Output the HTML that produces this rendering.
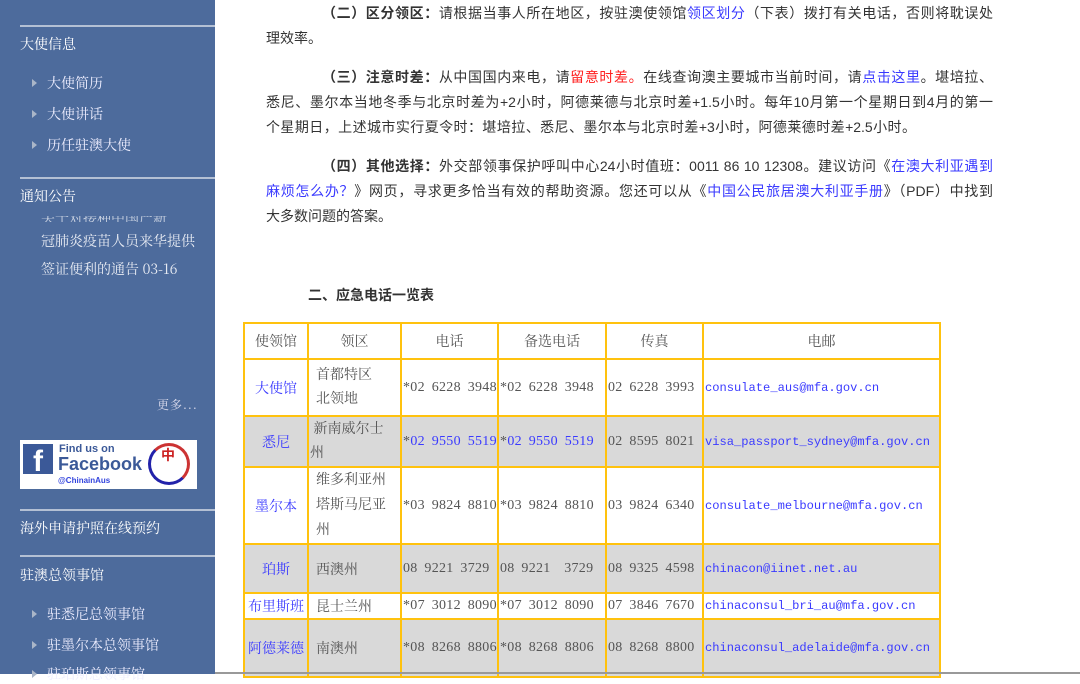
<!DOCTYPE html>
<html><head><meta charset="utf-8"><style>
*{margin:0;padding:0;box-sizing:border-box}
body{width:1080px;height:674px;overflow:hidden;background:#fff;position:relative;font-family:"Liberation Sans","Noto Sans CJK SC",sans-serif}
#side{position:absolute;left:0;top:0;width:215px;height:674px;background:#4d6b9c;color:#fff}
.hr{position:absolute;left:20px;width:195px;height:2px;background:#b4c0d4}
.h{position:absolute;left:20px;font-family:"Noto Serif CJK SC",serif;font-size:14px;color:#fff}
.it{position:absolute;left:47px;font-family:"Noto Serif CJK SC",serif;font-size:14px;color:#eef}
.it:before{content:"";position:absolute;left:-15px;top:6px;border-left:5px solid #aab6c8;border-top:4px solid transparent;border-bottom:4px solid transparent}
.n{position:absolute;left:41px;font-family:"Noto Serif CJK SC",serif;font-size:14px;color:#e6eaf2}
.p{position:absolute;font-size:14px;color:#333;white-space:nowrap;text-align:justify;text-align-last:justify}
.b{font-weight:bold}
.l{color:#3a3aff}
.r{color:#ff2020}
table{position:absolute;left:243px;top:322px;width:696px;table-layout:fixed;border-collapse:collapse;font-family:"Liberation Serif","Noto Serif CJK SC",serif;font-size:14px;color:#555}
td{border:2px solid #ffc20e;padding:0 1px;vertical-align:middle;white-space:nowrap;overflow:hidden}
td.c{text-align:center}
td.w{white-space:normal}
td.ph{word-spacing:3px;letter-spacing:0.3px}
tr.g td{background:#d9d9d9}
.bl{color:#3a3aff}
.m{font-family:"Liberation Mono","Noto Serif CJK SC",monospace;font-size:12.1px;color:#3a3aff}
</style></head><body>
<div id="side">
<div class="hr" style="top:25px"></div>
<div class="h" style="top:34px">大使信息</div>
<div class="it" style="top:73px">大使简历</div>
<div class="it" style="top:104px">大使讲话</div>
<div class="it" style="top:135px">历任驻澳大使</div>
<div class="hr" style="top:177px"></div>
<div class="h" style="top:186px">通知公告</div>
<div class="n" style="top:216px;height:6px;overflow:hidden;line-height:4px;opacity:.8">关于对接种中国产新</div>
<div class="n" style="top:231px">冠肺炎疫苗人员来华提供</div>
<div class="n" style="top:259px">签证便利的通告 03-16</div>
<div class="n" style="top:396px;left:157px;font-size:12px;color:#dde;letter-spacing:1px">更多...</div>
<div style="position:absolute;left:20px;top:440px;width:177px;height:49px;background:#fff">
 <div style="position:absolute;left:3px;top:4px;width:30px;height:30px;background:#3b5998;color:#fff;font:bold 30px/36px 'Liberation Sans';text-align:center;overflow:hidden">f</div>
 <div style="position:absolute;left:39px;top:3px;font:bold 11px 'Liberation Sans';color:#3b5998">Find us on</div>
 <div style="position:absolute;left:38px;top:14px;font:bold 18px 'Liberation Sans';color:#3b5998">Facebook</div>
 <div style="position:absolute;left:38px;top:36px;font:bold 8px 'Liberation Sans';color:#3344dd">@ChinainAus</div>
 <div style="position:absolute;left:128px;top:3px;width:42px;height:42px;border-radius:50%;border:3px solid #c33;border-bottom-color:#22a;border-left-color:#22a"></div>
 <div style="position:absolute;left:141px;top:5px;font:bold 14px 'Noto Sans CJK SC';color:#c22">中</div>
</div>
<div class="hr" style="top:509px"></div>
<div class="h" style="top:518px">海外申请护照在线预约</div>
<div class="hr" style="top:555px"></div>
<div class="h" style="top:565px">驻澳总领事馆</div>
<div class="it" style="top:604px">驻悉尼总领事馆</div>
<div class="it" style="top:635px">驻墨尔本总领事馆</div>
<div class="it" style="top:664px">驻珀斯总领事馆</div>
</div>

<div class="p" style="left:322px;top:3px;width:671px"><span class="b">（二）区分领区：</span>请根据当事人所在地区，按驻澳使领馆<span class="l">领区划分</span>（下表）拨打有关电话，否则将耽误处</div>
<div class="p" style="left:266px;top:28px;text-align-last:auto">理效率。</div>
<div class="p" style="left:322px;top:67px;width:671px"><span class="b">（三）注意时差：</span>从中国国内来电，请<span class="r">留意时差。</span>在线查询澳主要城市当前时间，请<span class="l">点击这里</span>。堪培拉、</div>
<div class="p" style="left:266px;top:92px;width:727px">悉尼、墨尔本当地冬季与北京时差为+2小时，阿德莱德与北京时差+1.5小时。每年10月第一个星期日到4月的第一</div>
<div class="p" style="left:266px;top:117px;width:650px">个星期日，上述城市实行夏令时：堪培拉、悉尼、墨尔本与北京时差+3小时，阿德莱德时差+2.5小时。</div>
<div class="p" style="left:322px;top:156px;width:671px"><span class="b">（四）其他选择：</span>外交部领事保护呼叫中心24小时值班：0011 86 10 12308。建议访问《<span class="l">在澳大利亚遇到</span></div>
<div class="p" style="left:266px;top:181px;width:727px"><span class="l">麻烦怎么办？</span>》网页，寻求更多恰当有效的帮助资源。您还可以从《<span class="l">中国公民旅居澳大利亚手册</span>》（PDF）中找到</div>
<div class="p" style="left:266px;top:206px;text-align-last:auto">大多数问题的答案。</div>
<div class="p b" style="left:308px;top:285px;font-size:14px;text-align-last:auto">二、应急电话一览表</div>

<table>
<colgroup><col style="width:64px"><col style="width:93px"><col style="width:97px"><col style="width:108px"><col style="width:97px"><col style="width:237px"></colgroup>
<tr style="height:36px"><td class="c">使领馆</td><td class="c">领区</td><td class="c">电话</td><td class="c">备选电话</td><td class="c">传真</td><td class="c">电邮</td></tr>
<tr style="height:57px"><td class="c bl">大使馆</td><td style="padding-left:7px;line-height:24px" class="w">首都特区<br>北领地</td><td class="ph">*02 6228 3948</td><td class="ph">*02 6228 3948</td><td class="ph">02 6228 3993</td><td class="m">consulate_aus@mfa.gov.cn</td></tr>
<tr class="g" style="height:51px"><td class="c bl">悉尼</td><td style="line-height:24px" class="w">&nbsp;新南威尔士<br>州</td><td class="ph">*<span class="bl">02 9550 5519</span></td><td class="ph">*<span class="bl">02 9550 5519</span></td><td class="ph">02 8595 8021</td><td class="m">visa_passport_sydney@mfa.gov.cn</td></tr>
<tr style="height:77px"><td class="c bl">墨尔本</td><td style="padding-left:7px;line-height:25px" class="w">维多利亚州<br>塔斯马尼亚<br>州</td><td class="ph">*03 9824 8810</td><td class="ph">*03 9824 8810</td><td class="ph">03 9824 6340</td><td class="m">consulate_melbourne@mfa.gov.cn</td></tr>
<tr class="g" style="height:49px"><td class="c bl">珀斯</td><td style="padding-left:7px">西澳州</td><td class="ph">08 9221 3729</td><td class="ph">08 9221 &nbsp;3729</td><td class="ph">08 9325 4598</td><td class="m">chinacon@iinet.net.au</td></tr>
<tr style="height:26px"><td class="c bl">布里斯班</td><td style="padding-left:7px">昆士兰州</td><td class="ph">*07 3012 8090</td><td class="ph">*07 3012 8090</td><td class="ph">07 3846 7670</td><td class="m">chinaconsul_bri_au@mfa.gov.cn</td></tr>
<tr class="g" style="height:58px"><td class="c bl">阿德莱德</td><td style="padding-left:7px">南澳州</td><td class="ph">*08 8268 8806</td><td class="ph">*08 8268 8806</td><td class="ph">08 8268 8800</td><td class="m">chinaconsul_adelaide@mfa.gov.cn</td></tr>
</table>
<div style="position:absolute;left:215px;top:672px;width:865px;height:2px;background:#999"></div>
</body></html>
